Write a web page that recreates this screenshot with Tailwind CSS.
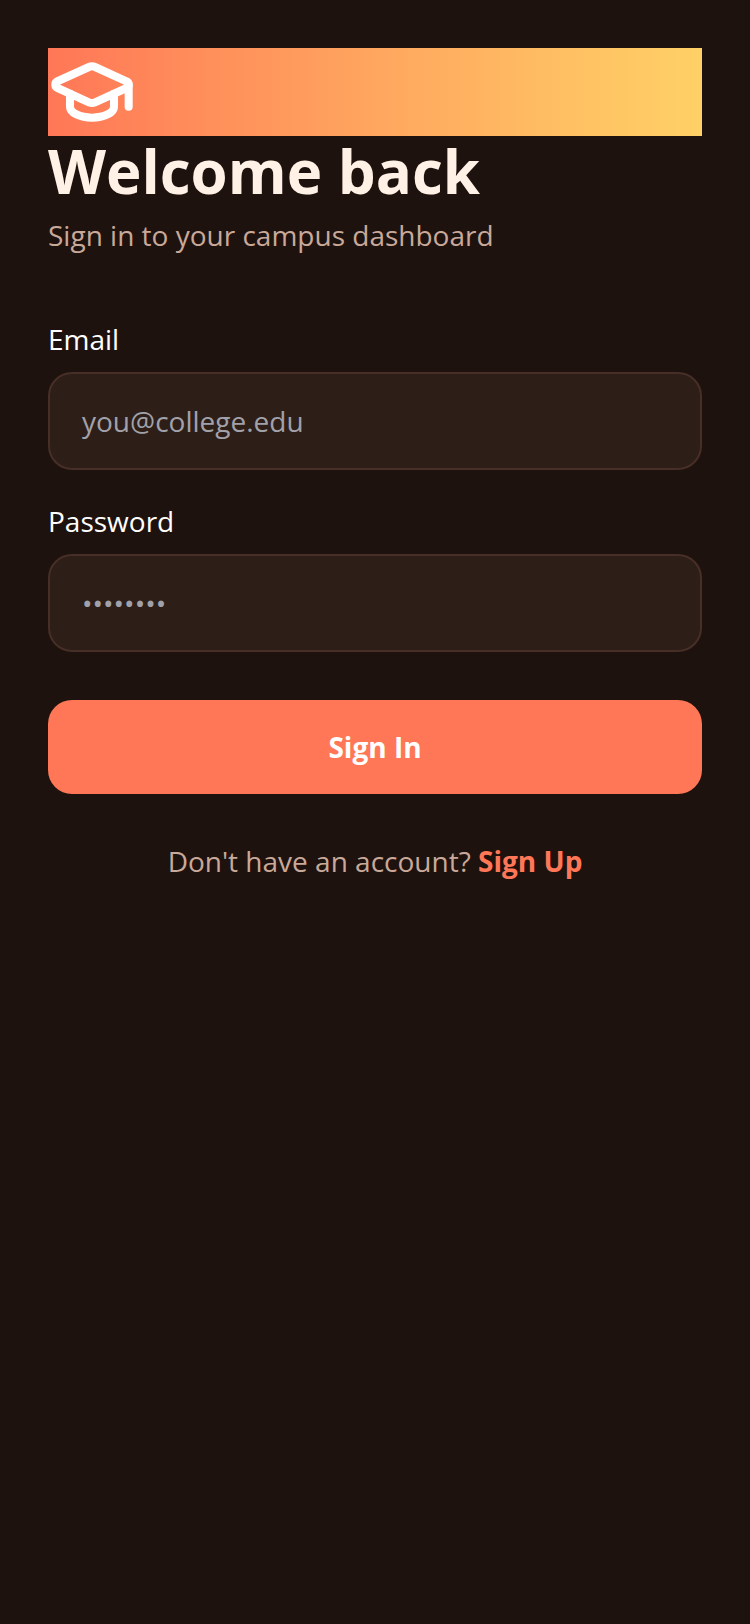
<!DOCTYPE html>
<html lang="en">
<head>
  <meta charset="UTF-8" />
  <meta name="viewport" content="width=device-width, initial-scale=1.0" />
  <title>Sign in</title>
  <script src="https://cdn.jsdelivr.net/npm/@tailwindcss/browser@4"></script>
</head>
<body class="bg-[#1e120e] min-h-screen font-['Open_Sans',sans-serif]">
  <div class="w-[750px] h-[1624px] px-12 pt-12">
    <div class="h-[88px] bg-linear-to-r from-[#ff7757] to-[#ffd166]">
      <svg class="w-[88px] h-[88px] text-white" viewBox="0 0 24 24" fill="none" stroke="currentColor" stroke-width="2.2" stroke-linecap="round" stroke-linejoin="round">
        <path d="M21.42 10.922a1 1 0 0 0-.019-1.838L12.83 5.18a2 2 0 0 0-1.66 0L2.6 9.08a1 1 0 0 0 0 1.832l8.57 3.908a2 2 0 0 0 1.66 0z" />
        <path d="M22 10v6" />
        <path d="M6 12.5V16a6 3 0 0 0 12 0v-3.5" />
      </svg>
    </div>
    <h1 class="text-[60px] leading-[70px] font-bold text-[#fff1e6]">Welcome back</h1>
    <p class="text-[28px] leading-[40px] mt-[9px] text-[#c9a999]">Sign in to your campus dashboard</p>

    <label class="block text-[28px] leading-[38px] text-white mt-[65px]">Email</label>
    <div class="mt-[14px] h-[98px] rounded-3xl bg-[#2d1e18] border-2 border-[#472f27] px-8 flex items-center text-[28px] text-[#a1a1aa]">you@college.edu</div>

    <label class="block text-[28px] leading-[38px] text-white mt-8">Password</label>
    <div class="mt-[14px] h-[98px] rounded-3xl bg-[#2d1e18] border-2 border-[#472f27] px-8 flex items-center text-[28px] text-[#a1a1aa]">••••••••</div>

    <button class="block w-full mt-12 h-[94px] rounded-3xl bg-[#ff7757] text-white text-[28px] font-bold">Sign In</button>

    <p class="mt-[47px] text-center text-[28px] leading-[40px] text-[#c9a999]">Don't have an account? <span class="font-bold text-[#ff7757]">Sign Up</span></p>
  </div>
</body>
</html>
